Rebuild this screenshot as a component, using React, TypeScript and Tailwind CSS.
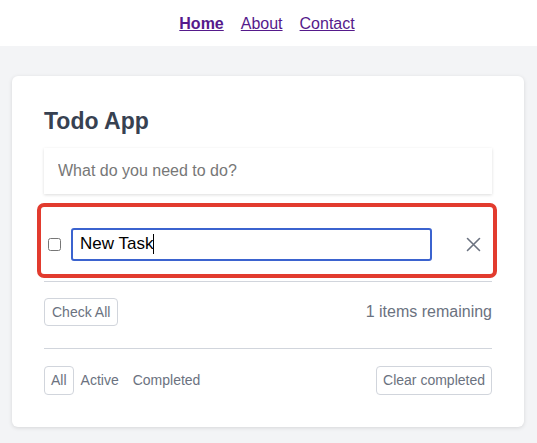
function CloseIcon() {
  return (
    <svg width="15" height="15" viewBox="0 0 15 15" fill="none" stroke="#6b7280" strokeWidth="1.6" strokeLinecap="round">
      <path d="M1.5 1.5l12 12M13.5 1.5l-12 12" />
    </svg>
  );
}

export default function App() {
  return (
    <div className="min-h-[443px] bg-[#f3f4f6] font-['Liberation_Sans',Arial,sans-serif]">
      <nav className="h-[46px] bg-white flex items-center justify-center gap-[17px] pt-[1px] pr-[3px] text-[16px]">
        <a href="#" className="font-bold text-[#551a8b] underline">Home</a>
        <a href="#" className="text-[#551a8b] underline">About</a>
        <a href="#" className="text-[#551a8b] underline">Contact</a>
      </nav>

      <div className="pl-3 pr-[13px] pt-[30px] pb-4">
        <div className="bg-white rounded-md shadow-[0_1px_4px_rgba(0,0,0,0.12)] pl-8 pr-[32px] pt-[29px] pb-[32px]">
          <h1 className="text-[23px] leading-8 font-bold text-[#374151] mb-[11px]">Todo App</h1>

          <input
            className="w-full h-[46px] px-[14px] text-[16px] bg-white shadow-[0_1px_3px_rgba(0,0,0,0.14)] placeholder:text-[#777] outline-none"
            placeholder="What do you need to do?"
          />

          <ul className="mt-[13px]">
            <li className="relative flex items-center h-[75px] border-b border-gray-300 pl-1 pr-[11px]">
              <input type="checkbox" className="w-[13px] h-[13px] m-0" />
              <div className="ml-[10px] flex-1 h-[33px] border-2 border-[#3b63cf] rounded-[3px] flex items-center pl-[7px] text-[17px] text-black">
                New Task<span className="w-px h-[20px] bg-black"></span>
              </div>
              <button className="ml-[34px]"><CloseIcon /></button>
              <div className="absolute -left-[7px] -right-[5px] -top-[4px] bottom-[3px] border-4 border-[#e23b2e] rounded-[7px] pointer-events-none"></div>
            </li>
          </ul>

          <div className="flex items-center justify-between mt-4">
            <button className="h-[28px] px-[7px] border border-gray-300 rounded text-[14px] text-[#6b7280]">Check All</button>
            <span className="text-[16px] text-[#6b7280]">1 items remaining</span>
          </div>

          <div className="mt-[22px] border-t border-gray-300 pt-[17px] flex items-center justify-between">
            <div className="flex">
              <button className="h-[29px] px-[6px] border border-gray-300 rounded text-[14px] text-[#6b7280]">All</button>
              <button className="h-[29px] px-[6px] border border-transparent rounded text-[14px] text-[#6b7280]">Active</button>
              <button className="h-[29px] px-[6px] border border-transparent rounded text-[14px] text-[#6b7280]">Completed</button>
            </div>
            <button className="h-[29px] px-[6px] border border-gray-300 rounded text-[14px] text-[#6b7280]">Clear completed</button>
          </div>
        </div>
      </div>
    </div>
  );
}
